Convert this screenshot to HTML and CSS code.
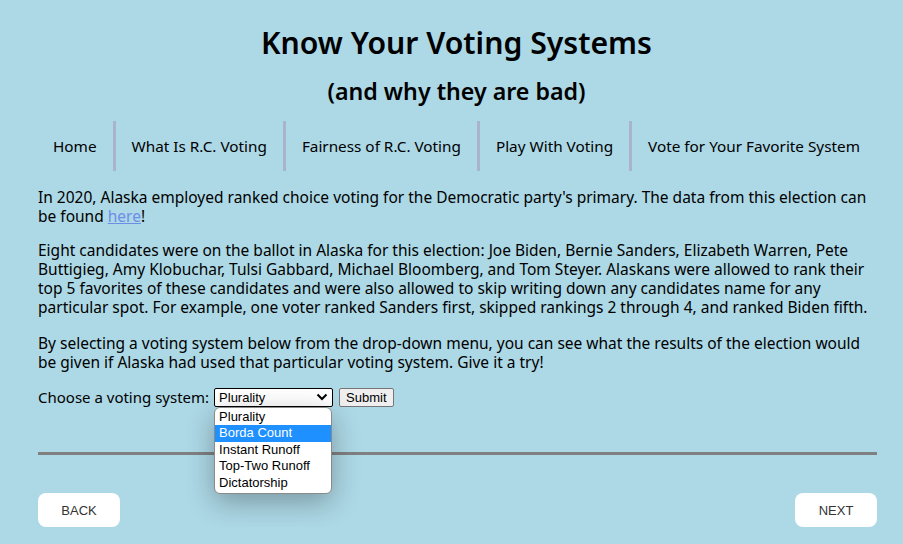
FILE: index.html
```html
<!DOCTYPE html>
<html lang="en">
<head>
  <meta charset="UTF-8">
  <title>Know Your Voting Systems</title>
  <link rel="stylesheet" href="styles.css">
</head>
<body>
  <header>
    <h1>Know Your Voting Systems</h1>
    <h2>(and why they are bad)</h2>
  </header>

  <nav class="topnav">
    <a href="#">Home</a>
    <a href="#">What Is R.C. Voting</a>
    <a href="#">Fairness of R.C. Voting</a>
    <a href="#">Play With Voting</a>
    <a href="#">Vote for Your Favorite System</a>
  </nav>

  <main class="content">
    <p>In 2020, Alaska employed ranked choice voting for the Democratic party's primary. The data from this election can be found <a href="#">here</a>!</p>
    <p>Eight candidates were on the ballot in Alaska for this election: Joe Biden, Bernie Sanders, Elizabeth Warren, Pete Buttigieg, Amy Klobuchar, Tulsi Gabbard, Michael Bloomberg, and Tom Steyer. Alaskans were allowed to rank their top 5 favorites of these candidates and were also allowed to skip writing down any candidates name for any particular spot. For example, one voter ranked Sanders first, skipped rankings 2 through 4, and ranked Biden fifth.</p>
    <p class="try">By selecting a voting system below from the drop-down menu, you can see what the results of the election would be given if Alaska had used that particular voting system. Give it a try!</p>

    <form class="chooser">
      <label>Choose a voting system:</label>
      <div class="select-wrap">
        <div class="select">
          <span>Plurality</span>
          <svg width="12" height="8" viewBox="0 0 12 8"><path d="M1.5 1.5 L6 6 L10.5 1.5" fill="none" stroke="#000" stroke-width="2"/></svg>
        </div>
        <ul class="options">
          <li>Plurality</li>
          <li class="active">Borda Count</li>
          <li>Instant Runoff</li>
          <li>Top-Two Runoff</li>
          <li>Dictatorship</li>
        </ul>
      </div>
      <button type="button" class="submit">Submit</button>
    </form>

    <hr>

    <div class="pager">
      <button type="button">BACK</button>
      <button type="button">NEXT</button>
    </div>
  </main>
</body>
</html>
```

FILE: styles.css
```css
body {
  font-family: 'Noto Sans', sans-serif;
  background: #add8e6;
  color: #000;
  margin: 0;
  padding: 0;
}
header {
  text-align: center;
  padding: 22px 0 0 10px;
}
header h1 {
  margin: 0;
  font-size: 30.2px;
  font-weight: 600;
  line-height: 42px;
}
header h2 {
  margin: 11px 0 0;
  font-size: 23.2px;
  font-weight: 600;
  line-height: 32px;
}
.topnav {
  display: flex;
  justify-content: center;
  margin-top: 14px;
  padding-left: 10px;
}
.topnav a {
  color: #000;
  text-decoration: none;
  font-size: 15.3px;
  padding: 14px 16px;
  line-height: 22px;
  border-left: 3px solid #a9b4cc;
}
.topnav a:first-child {
  border-left: none;
}
.content {
  padding: 0 26px 0 38px;
}
.content p {
  font-size: 15.5px;
  line-height: 19px;
  margin: 15px 0;
}
.content p:first-child {
  margin-top: 17px;
}
.content p.try {
  margin-top: 17px;
}
.content a {
  color: #6e8ee6;
}
.chooser {
  display: flex;
  align-items: center;
  font-size: 15px;
  margin-top: 15px;
}
.chooser label {
  margin-right: 5px;
}
.select-wrap {
  position: relative;
}
.select {
  width: 109px;
  height: 17px;
  border: 1px solid #000;
  border-radius: 2px;
  background: #fff;
  display: flex;
  align-items: center;
  justify-content: space-between;
  padding: 0 4px;
  font-family: 'Liberation Sans', sans-serif;
  font-size: 13px;
}
.options {
  position: absolute;
  top: 19px;
  left: 0;
  width: 116px;
  margin: 0;
  padding: 1px 0 2px;
  list-style: none;
  background: #fff;
  border: 1px solid #8a8a8a;
  border-radius: 6px;
  box-shadow: 0 8px 28px rgba(0,0,0,0.3);
  font-family: 'Liberation Sans', sans-serif;
  font-size: 13px;
  line-height: 16.5px;
  overflow: hidden;
}
.options li {
  padding: 0 4px;
}
.options li.active {
  background: #1e90ff;
  color: #fff;
}
.submit {
  margin-left: 6px;
  font-family: 'Liberation Sans', sans-serif;
  font-size: 13px;
  padding: 1px 6px;
  background: #efefef;
  border: 1px solid #767676;
  border-radius: 2px;
}
hr {
  border: none;
  border-top: 3px solid #808080;
  margin: 45px 0 38px;
}
.pager {
  display: flex;
  justify-content: space-between;
}
.pager button {
  width: 82px;
  height: 34px;
  background: #fff;
  border: none;
  border-radius: 8px;
  font-family: 'Liberation Sans', sans-serif;
  font-size: 13px;
  color: #333;
}
```
